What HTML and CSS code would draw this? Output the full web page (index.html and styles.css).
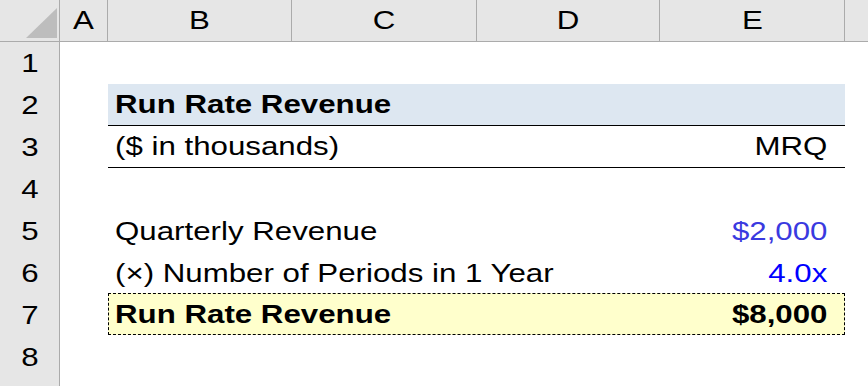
FILE: index.html
```html
<!DOCTYPE html>
<html>
<head>
<meta charset="utf-8">
<link rel="stylesheet" href="styles.css">
</head>
<body>
<div class="sheet">
  <div class="row head">
    <div class="corner"><svg width="60" height="41" viewBox="0 0 60 41"><polygon points="57,8 57,38 26,38" fill="#BDBDBD"/></svg></div>
    <div class="colh"><span class="w c">A</span></div>
    <div class="colh"><span class="w c">B</span></div>
    <div class="colh"><span class="w c">C</span></div>
    <div class="colh"><span class="w c">D</span></div>
    <div class="colh"><span class="w c">E</span></div>
    <div class="colh last"></div>
  </div>
  <div class="row"><div class="rowh"><span class="w c">1</span></div><div></div><div class="content"></div><div></div></div>
  <div class="row"><div class="rowh"><span class="w c">2</span></div><div></div><div class="content title"><span class="w l">Run Rate Revenue</span></div><div></div></div>
  <div class="row"><div class="rowh"><span class="w c">3</span></div><div></div><div class="content units"><span class="w l">($ in thousands)</span><span class="w r">MRQ</span></div><div></div></div>
  <div class="row"><div class="rowh"><span class="w c">4</span></div><div></div><div class="content"></div><div></div></div>
  <div class="row"><div class="rowh"><span class="w c">5</span></div><div></div><div class="content"><span class="w l">Quarterly Revenue</span><span class="w r input">$2,000</span></div><div></div></div>
  <div class="row"><div class="rowh"><span class="w c">6</span></div><div></div><div class="content"><span class="w l">(×) Number of Periods in 1 Year</span><span class="w r input2">4.0x</span></div><div></div></div>
  <div class="row"><div class="rowh"><span class="w c">7</span></div><div></div><div class="content total"><span class="w l">Run Rate Revenue</span><span class="w r">$8,000</span></div><div></div></div>
  <div class="row"><div class="rowh"><span class="w c">8</span></div><div></div><div class="content"></div><div></div></div>
  <div class="row"><div class="rowh"></div><div></div><div class="content"></div><div></div></div>
</div>
</body>
</html>
```
FILE: styles.css
```css
html, body {
  margin: 0;
  padding: 0;
  background: #fff;
  overflow: hidden;
}
.sheet {
  width: 868px;
  height: 386px;
  overflow: hidden;
  font-family: "Liberation Sans", Arial, sans-serif;
  font-size: 25px;
  color: #000;
}
.w {
  display: inline-block;
  transform: scaleX(1.25);
}
.w.l { transform-origin: left center; }
.w.r { transform-origin: right center; }
.w.c { transform-origin: center center; }
.row {
  display: grid;
  grid-template-columns: 60px 48px 737px 23px;
  height: 42px;
}
.row.head {
  grid-template-columns: 60px 48px 184px 185px 183px 185px 23px;
  height: 42px;
  background: #E6E6E6;
  box-sizing: border-box;
  border-bottom: 1px solid #ABABAB;
}
.corner {
  border-right: 1px solid #ABABAB;
  box-sizing: border-box;
  height: 41px;
}
.corner svg { display: block; }
.colh {
  box-sizing: border-box;
  border-right: 1px solid #ABABAB;
  text-align: center;
  line-height: 41px;
}
.colh.last { border-right: none; }
.rowh {
  background: #E6E6E6;
  box-sizing: border-box;
  border-right: 1px solid #ABABAB;
  border-bottom: 1px solid #ABABAB;
  text-align: center;
  line-height: 42px;
}
.content {
  display: flex;
  justify-content: space-between;
  align-items: center;
  box-sizing: border-box;
  height: 42px;
  padding: 0 18px 0 7px;
  line-height: 41px;
  white-space: nowrap;
}
.title {
  background: #DDE7F1;
  border-bottom: 1px solid #000;
  font-weight: bold;
}
.units {
  border-bottom: 1px solid #000;
}
.input { color: #3a3ae0; }
.input2 { color: #0000ff; }
.total {
  background: #FFFFCC;
  border: 1px dashed #000;
  margin-top: -1px;
  padding: 0 17px 0 6px;
  font-weight: bold;
}
```
